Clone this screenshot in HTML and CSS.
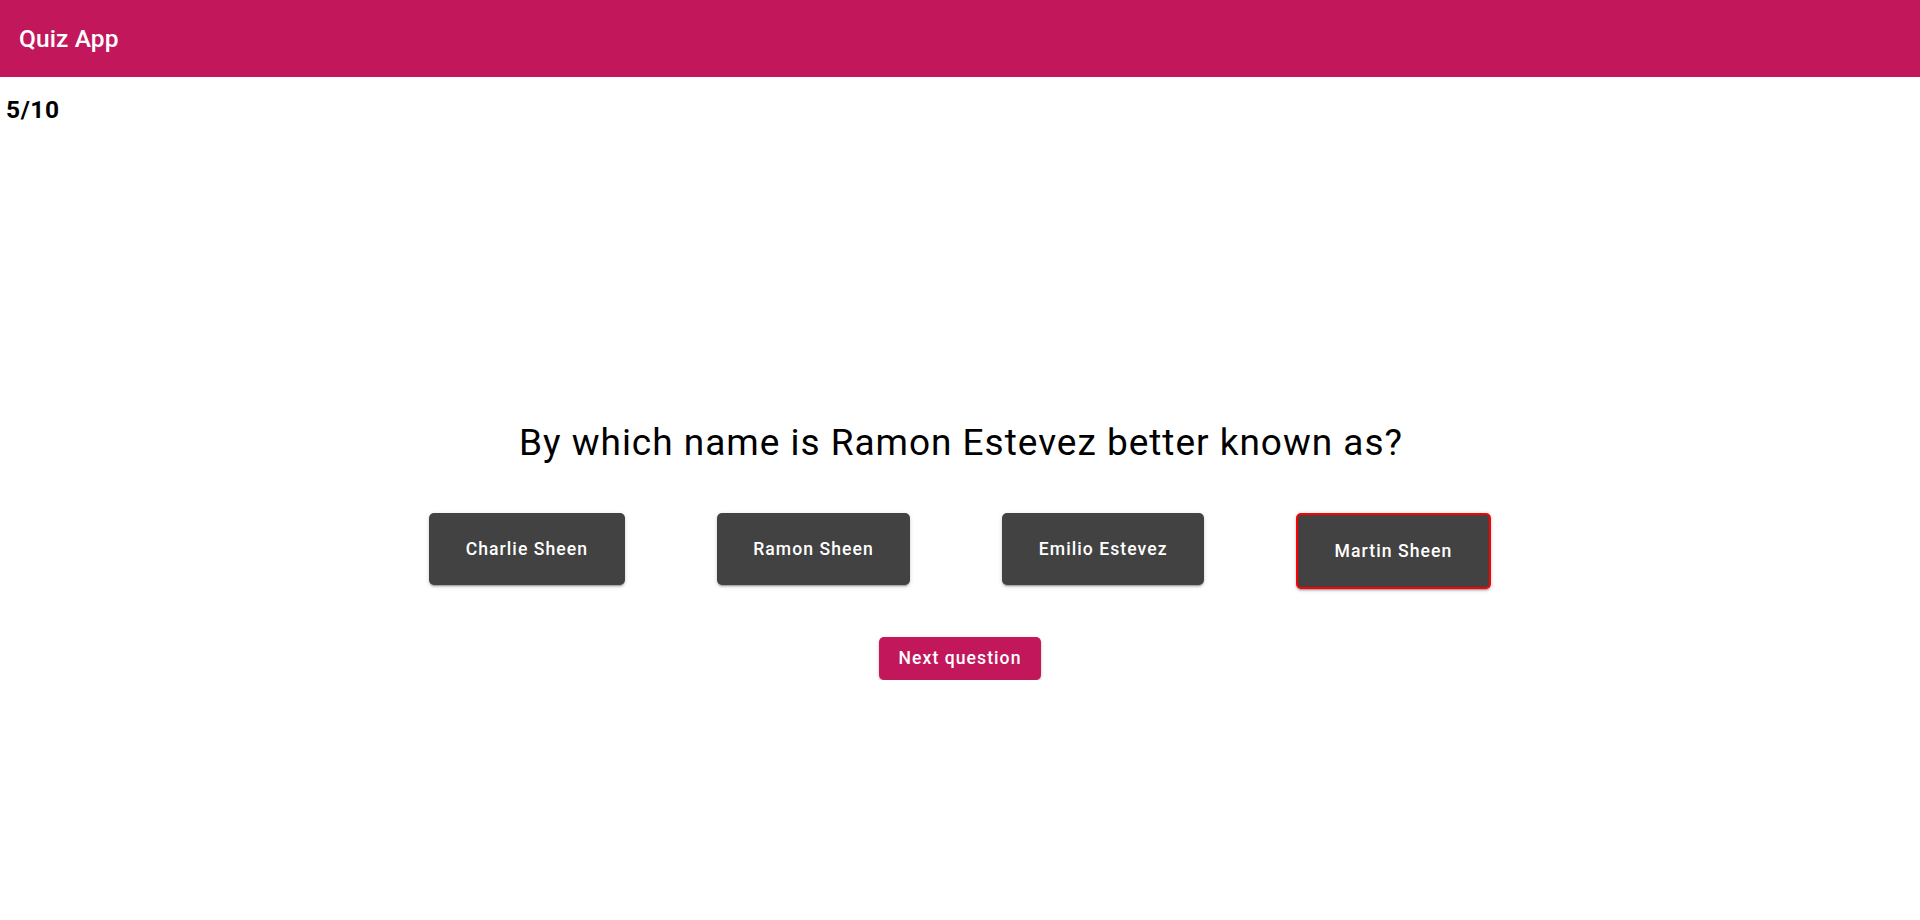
FILE: index.html
```html
<!DOCTYPE html>
<html lang="en">
<head>
<meta charset="utf-8">
<title>Quiz App</title>
<link rel="stylesheet" href="styles.css">
</head>
<body>
<header class="app-bar">
  <h1 class="app-title">Quiz App</h1>
</header>
<main class="quiz">
  <h2 class="score">5/10</h2>
  <section class="question-block">
    <p class="question">By which name is Ramon Estevez better known as?</p>
    <div class="answers">
      <button class="answer">Charlie Sheen</button>
      <button class="answer">Ramon Sheen</button>
      <button class="answer">Emilio Estevez</button>
      <button class="answer answer-selected">Martin Sheen</button>
    </div>
    <button class="next">Next question</button>
  </section>
</main>
</body>
</html>
```
FILE: styles.css
```css
html, body {
  margin: 0;
  padding: 0;
  background: #ffffff;
  font-family: Roboto, "Noto Sans", "Liberation Sans", sans-serif;
  color: #000000;
}

.app-bar {
  height: 77px;
  background: #c2185b;
  display: flex;
  align-items: center;
  padding: 0 19px;
  box-sizing: border-box;
}

.app-title {
  margin: 0;
  font-size: 24.5px;
  font-weight: 500;
  color: #ffffff;
  letter-spacing: 0.1px;
}

.quiz {
  display: flex;
  flex-direction: column;
}

.score {
  margin: 18px 0 0 0;
  padding-left: 6px;
  font-size: 24.5px;
  font-weight: 700;
  line-height: normal;
  letter-spacing: 0.6px;
}

.question-block {
  display: flex;
  flex-direction: column;
  align-items: center;
  margin-top: 297px;
}

.question {
  margin: 0;
  font-size: 37px;
  font-weight: 400;
  line-height: normal;
  letter-spacing: 0.98px;
  padding-left: 2px;
}

.answers {
  display: flex;
  align-items: flex-start;
  justify-content: center;
  gap: 92px;
  margin-top: 49px;
}

.answer {
  font-family: Roboto, "Noto Sans", "Liberation Sans", sans-serif;
  font-size: 17.6px;
  font-weight: 500;
  line-height: 30px;
  letter-spacing: 1.05px;
  color: #ffffff;
  background: #424242;
  border: none;
  border-radius: 5px;
  padding: 21px 36.5px;
  box-shadow: 0 3px 1px -2px rgba(0,0,0,0.2), 0 2px 2px 0 rgba(0,0,0,0.14), 0 1px 5px 0 rgba(0,0,0,0.12);
  cursor: pointer;
}

.answer-selected {
  border: 2px solid #ff0000;
}

.next {
  margin-top: 48px;
  font-family: Roboto, "Noto Sans", "Liberation Sans", sans-serif;
  font-size: 17.6px;
  font-weight: 500;
  line-height: 29px;
  letter-spacing: 1.05px;
  color: #ffffff;
  background: #c2185b;
  border: none;
  border-radius: 5px;
  padding: 7px 20px;
  box-shadow: 0 3px 1px -2px rgba(0,0,0,0.2), 0 2px 2px 0 rgba(0,0,0,0.14), 0 1px 5px 0 rgba(0,0,0,0.12);
  cursor: pointer;
}
```
